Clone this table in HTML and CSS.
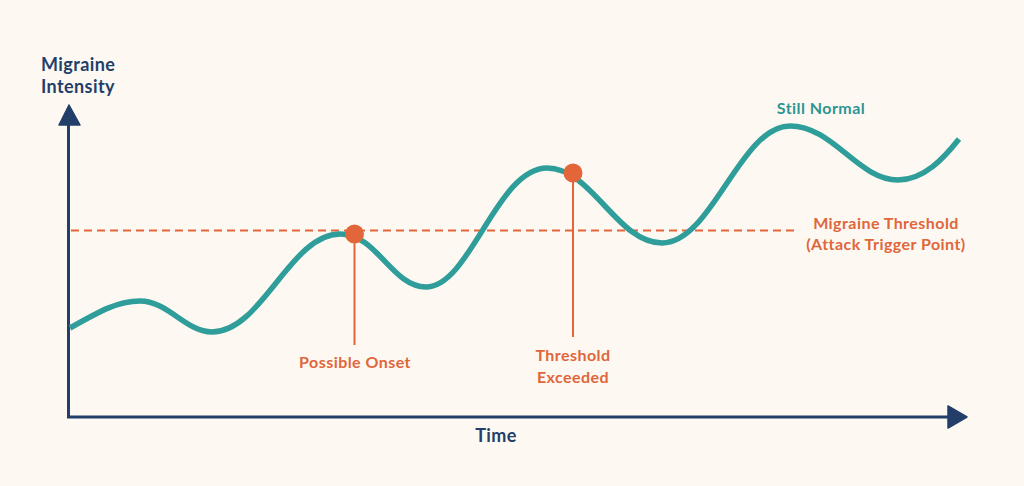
FILE: index.html
```html
<!DOCTYPE html>
<html lang="en">
<head>
<meta charset="utf-8">
<title>Migraine Threshold</title>
<link rel="stylesheet" href="styles.css">
</head>
<body>
<main class="page">
  <svg class="chart" width="1024" height="486" viewBox="0 0 1024 486" xmlns="http://www.w3.org/2000/svg">
    <!-- axes -->
    <line class="axis" x1="68.5" y1="120" x2="68.5" y2="418"/>
    <polygon class="axis-head" points="69,105 59,125 80,125"/>
    <line class="axis" x1="67" y1="417" x2="952" y2="417"/>
    <polygon class="axis-head" points="967,417 948,406 948,428"/>

    <!-- threshold -->
    <line class="threshold" x1="71" y1="230.5" x2="799" y2="230.5"/>

    <!-- curve -->
    <path class="curve" d="M70,328 C100,311 118,301 140,301 C168,301 186,332 212,332 C262,332 290,234 340,234 C377,234 392,287 426,287 C470,287 497,168 547,168 C592,168 617,243 662,243 C712,243 740,126 790,126 C833,126 858,180 898,180 C924,180 944,158 959,139"/>

    <!-- markers -->
    <line class="stem" x1="354.5" y1="236" x2="354.5" y2="345"/>
    <circle class="dot" cx="354.5" cy="234" r="9.5"/>
    <line class="stem" x1="573" y1="175" x2="573" y2="337"/>
    <circle class="dot" cx="573" cy="173" r="9.5"/>

    <!-- labels -->
    <text class="lbl navy big" x="41" y="71">Migraine</text>
    <text class="lbl navy big" x="41" y="93">Intensity</text>
    <text class="lbl navy big mid" x="496" y="442">Time</text>
    <text class="lbl teal mid" x="821" y="114">Still Normal</text>
    <text class="lbl orange mid" x="886" y="229">Migraine Threshold</text>
    <text class="lbl orange mid" x="886" y="250">(Attack Trigger Point)</text>
    <text class="lbl orange mid" x="355" y="368">Possible Onset</text>
    <text class="lbl orange mid" x="573" y="361">Threshold</text>
    <text class="lbl orange mid" x="573" y="383">Exceeded</text>
  </svg>
</main>
</body>
</html>
```
FILE: styles.css
```css
html, body {
  margin: 0;
  padding: 0;
  background: #fdf9f2;
}
.page {
  width: 1024px;
  height: 486px;
  overflow: hidden;
  background: #fdf9f2;
}
.chart {
  display: block;
}
.axis {
  stroke: #223e69;
  stroke-width: 3;
  fill: none;
}
.axis-head {
  fill: #223e69;
  stroke: #223e69;
  stroke-width: 1.5;
  stroke-linejoin: round;
}
.threshold {
  stroke: #e2663a;
  stroke-width: 2;
  stroke-dasharray: 8 5;
}
.curve {
  fill: none;
  stroke: #2f9d9a;
  stroke-width: 5.5;
  stroke-linecap: butt;
  stroke-linejoin: round;
}
.stem {
  stroke: #e2663a;
  stroke-width: 2;
}
.dot {
  fill: #e2663a;
}
.lbl {
  font-family: Lato, "Open Sans", sans-serif;
  font-weight: 700;
  font-size: 16px;
  letter-spacing: 0.45px;
}
.big {
  font-size: 18px;
  letter-spacing: 0.4px;
}
.mid {
  text-anchor: middle;
}
.navy { fill: #223e69; }
.teal { fill: #2f9592; }
.orange { fill: #e0663b; }
```
